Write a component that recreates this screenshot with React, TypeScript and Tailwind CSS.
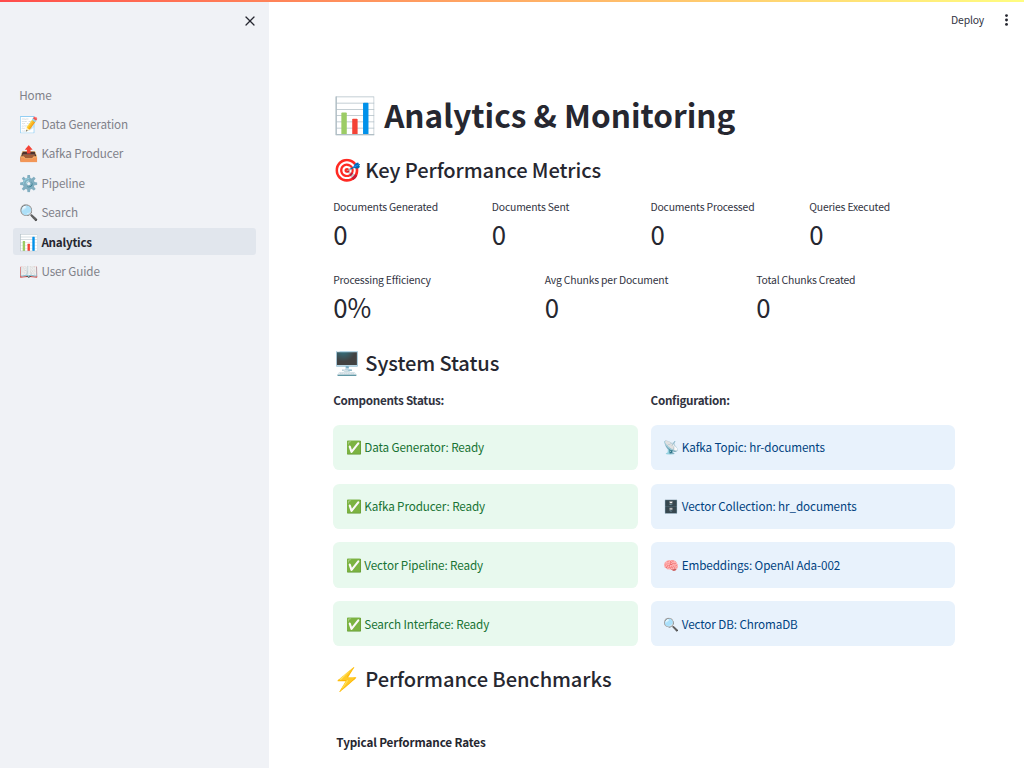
import { X } from 'lucide-react';

const nav: [string, string][] = [
  ['', 'Home'],
  ['📝', 'Data Generation'],
  ['📤', 'Kafka Producer'],
  ['⚙️', 'Pipeline'],
  ['🔍', 'Search'],
  ['📊', 'Analytics'],
  ['📖', 'User Guide'],
];

const counts: [string, string][] = [
  ['Documents Generated', '0'],
  ['Documents Sent', '0'],
  ['Documents Processed', '0'],
  ['Queries Executed', '0'],
];

const rates: [string, string][] = [
  ['Processing Efficiency', '0%'],
  ['Avg Chunks per Document', '0'],
  ['Total Chunks Created', '0'],
];

const components: [string, string][] = [
  ['✅', 'Data Generator: Ready'],
  ['✅', 'Kafka Producer: Ready'],
  ['✅', 'Vector Pipeline: Ready'],
  ['✅', 'Search Interface: Ready'],
];

const config: [string, string][] = [
  ['📡', 'Kafka Topic: hr-documents'],
  ['🗄️', 'Vector Collection: hr_documents'],
  ['🧠', 'Embeddings: OpenAI Ada-002'],
  ['🔍', 'Vector DB: ChromaDB'],
];

function NavItem({ icon, text, active }: { icon: string; text: string; active: boolean }) {
  return (
    <a
      className={
        active
          ? 'flex h-[26.2px] items-center rounded-[3px] bg-[#e1e6ed] px-[6.4px] font-bold text-[#262730]'
          : 'flex h-[26.2px] items-center rounded-[3px] px-[6.4px] text-[#808189]'
      }
    >
      {icon && <span className="w-[22.2px] shrink-0 pb-[2px] text-[15.6px] leading-[20px] tracking-normal">{icon}</span>}
      <span className={active ? 'tracking-[-0.25px]' : ''}>{text}</span>
    </a>
  );
}

function Metric({ label, value }: { label: string; value: string }) {
  return (
    <div>
      <div className="h-[19px] text-[10.4px] leading-[20px] tracking-[-0.18px]">{label}</div>
      <div className="h-[37px] origin-center scale-y-[1.04] text-[25.8px] leading-[36px] tracking-normal text-[#262730]">{value}</div>
    </div>
  );
}

function SectionHeading({ icon, text }: { icon: string; text: string }) {
  return (
    <h2 className="flex h-[30px] items-center gap-[4.2px] text-[20.1px] leading-[30px] font-medium tracking-normal whitespace-nowrap text-[#262730]">
      <span className="pb-[5px] text-[22.4px]">{icon}</span>
      <span className="pb-px tracking-[-0.1px]">{text}</span>
    </h2>
  );
}

function Alert({ icon, text, tone }: { icon: string; text: string; tone: 'success' | 'info' }) {
  return (
    <div
      className={
        tone === 'success'
          ? 'flex h-[45.2px] items-center gap-[2.4px] rounded-[6.4px] bg-[#e8f9ee] px-[12.8px] text-[#177233]'
          : 'flex h-[45.2px] items-center gap-[2.4px] rounded-[6.4px] bg-[#e8f2fc] px-[12.8px] text-[#004280]'
      }
    >
      <span className="text-[12.8px] leading-[20px] tracking-normal">{icon}</span>
      <span>{text}</span>
    </div>
  );
}

export default function App() {
  return (
    <div className="relative flex h-screen overflow-hidden bg-white font-['Noto_Sans_CJK_SC',sans-serif] text-[11.7px] leading-[20px] tracking-[-0.11px] text-[#31333f]">
      <div className="absolute inset-x-0 top-0 z-10 h-[1.6px] bg-linear-to-r from-[#ff4b4b] to-[#fffd80]" />
      <aside className="w-[268.8px] shrink-0 bg-[#f0f2f6] px-[12.8px]">
        <div className="flex h-[81.6px] justify-end pt-[13px]">
          <X className="-mr-[2px] h-4 w-4 text-[#262730]" strokeWidth={1.8} />
        </div>
        <nav className="flex flex-col gap-[3.2px]">
          {nav.map(([icon, text]) => (
            <NavItem key={text} icon={icon} text={text} active={text === 'Analytics'} />
          ))}
        </nav>
      </aside>
      <div className="flex min-w-0 grow flex-col">
        <header className="flex h-[48px] shrink-0 items-center justify-end pr-[15px] pb-[8px]">
          <span className="pb-px text-[10.4px] tracking-[-0.18px]">Deploy</span>
          <svg className="ml-[20px] h-[14px] w-[5px] fill-[#262730]" viewBox="0 0 5 14">
            <circle cx="2.5" cy="2.6" r="1.45" />
            <circle cx="2.5" cy="7" r="1.45" />
            <circle cx="2.5" cy="11.4" r="1.45" />
          </svg>
        </header>
        <main className="ml-[64.35px] w-[622px] pt-[42.4px]">
          <h1 className="flex h-[48px] items-center gap-[7px] text-[31.55px] leading-[48px] font-bold tracking-normal whitespace-nowrap text-[#262730]">
            <span className="pb-[2px] text-[35.2px]">📊</span>
            <span>Analytics &amp; Monitoring</span>
          </h1>
          <div className="mt-[17.6px]">
            <SectionHeading icon="🎯" text="Key Performance Metrics" />
          </div>
          <div className="mt-[11.2px] grid grid-cols-4 gap-[12.8px]">
            {counts.map(([label, value]) => <Metric key={label} label={label} value={value} />)}
          </div>
          <div className="mt-[16.5px] grid grid-cols-3 gap-[12.8px]">
            {rates.map(([label, value]) => <Metric key={label} label={label} value={value} />)}
          </div>
          <div className="mt-[22.8px]">
            <SectionHeading icon="🖥️" text="System Status" />
          </div>
          <div className="mt-[11.7px] grid grid-cols-2 gap-[12.8px]">
            <div className="flex flex-col gap-[13.6px]">
              <p className="h-[21px] font-bold tracking-[-0.3px]">Components Status:</p>
              {components.map(([icon, text]) => <Alert key={text} icon={icon} text={text} tone="success" />)}
            </div>
            <div className="flex flex-col gap-[13.6px]">
              <p className="h-[21px] font-bold tracking-[-0.3px]">Configuration:</p>
              {config.map(([icon, text]) => <Alert key={text} icon={icon} text={text} tone="info" />)}
            </div>
          </div>
          <div className="mt-[18.3px]">
            <SectionHeading icon="⚡" text="Performance Benchmarks" />
          </div>
          <div className="mt-[37.5px] pl-[3.2px] font-bold tracking-[-0.14px] text-[#262730]">Typical Performance Rates</div>
        </main>
      </div>
    </div>
  );
}
